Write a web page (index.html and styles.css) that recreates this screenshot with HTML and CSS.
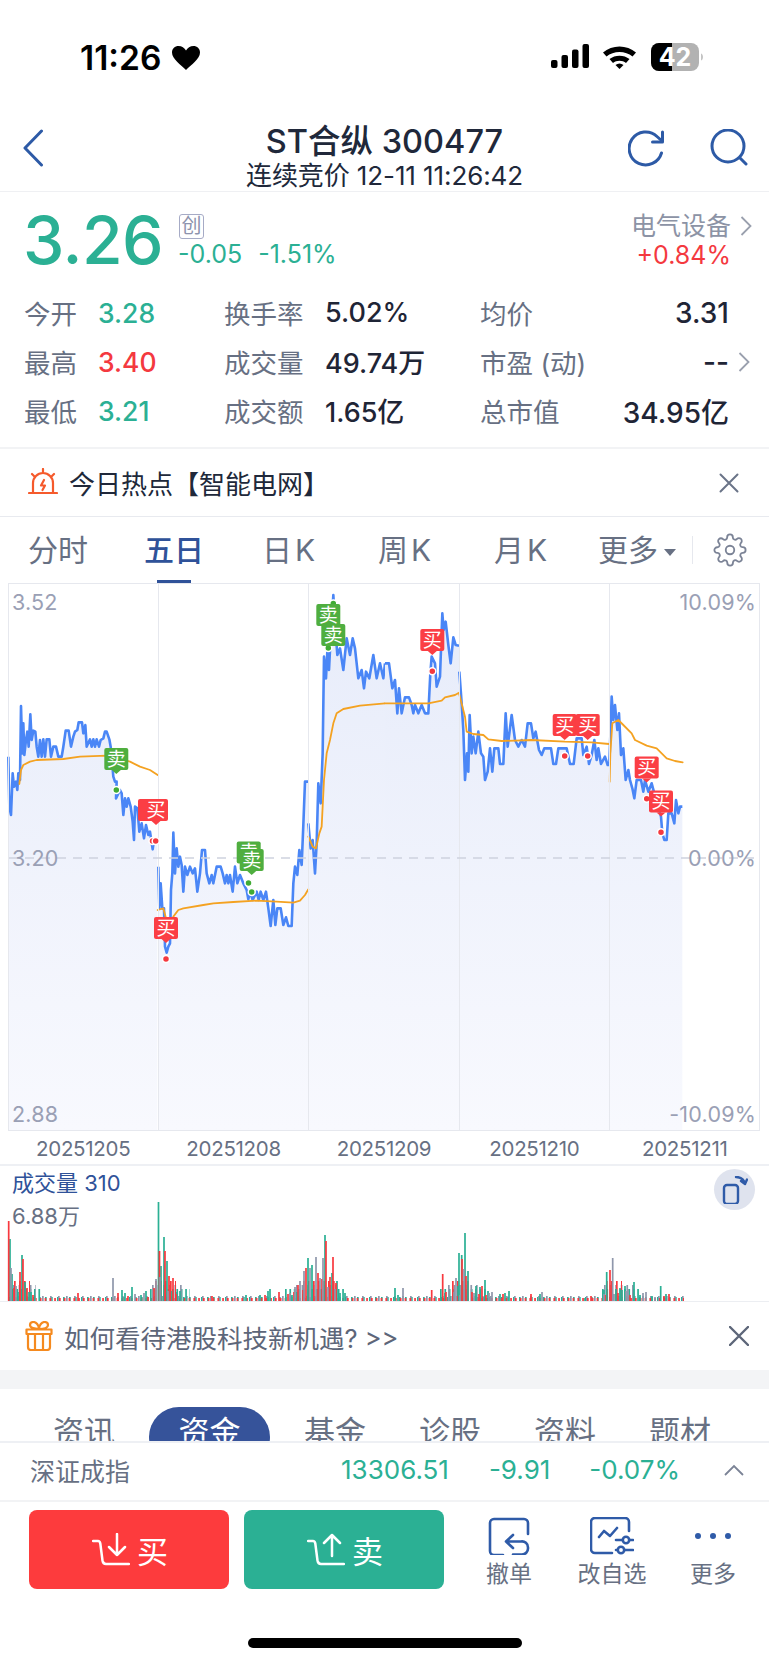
FILE: index.html
```html
<!DOCTYPE html>
<html lang="zh-CN">
<head>
<meta charset="utf-8">
<title>ST合纵 300477</title>
<link rel="stylesheet" href="styles.css">
</head>
<body>
<div class="screen">
  <div class="status">
    <div class="time">11:26</div>
    <svg class="heart" width="28" height="24" viewBox="0 0 28 24"><path d="M14 24C9 19 0 13 0 6.500 0 2.500 3 0 6.500 0 9.800 0 12.500 1.800 14 4.500 15.500 1.800 18.200 0 21.500 0 25 0 28 2.500 28 6.500 28 13 19 19 14 24Z"/></svg>
    <svg class="sysicons" width="152" height="30" viewBox="0 0 152 30">
      <rect x="0" y="17" width="6.500" height="8" rx="2"/><rect x="10.500" y="12" width="6.500" height="13" rx="2"/><rect x="21" y="6.500" width="6.500" height="18.500" rx="2"/><rect x="31.500" y="1" width="6.500" height="24" rx="2"/>
      <path d="M52 9.500C61 1.500 76 1.500 85 9.500L81.500 13.500C74.500 7.500 62.500 7.500 55.500 13.500Z"/><path d="M58.500 16C64 11.500 73 11.500 78.500 16L75 20C71.500 17 65.500 17 62 20Z"/><path d="M64.500 22C67 20 70 20 72.500 22L68.500 26Z"/>
      <rect x="100" y="0" width="48" height="28" rx="8" fill="#b2b2b2"/>
      <path d="M108 0H121V28H108A8 8 0 0 1 100 20V8A8 8 0 0 1 108 0Z"/>
      <path d="M150 10.500c1.500.5 2 2 2 3.500s-.5 3-2 3.500z" fill="#c4c4c4"/>
      <text class="batt" x="124" y="23">42</text>
    </svg>
  </div>

  <header class="nav">
    <svg class="back" width="22" height="38" viewBox="0 0 22 38"><path d="M19.500 2 3 19l16.500 17"/></svg>
    <div class="nav-title">
      <div class="name">ST合纵 300477</div>
      <div class="sub">连续竞价 12-11 11:26:42</div>
    </div>
    <div class="nav-actions">
      <svg width="38" height="38" viewBox="0 0 38 38"><path d="M33.500 24A16.500 16.500 0 1 1 29 7.500L34 12"/><path d="M34.500 3v10h-10"/></svg>
      <svg width="38" height="38" viewBox="0 0 38 38"><circle cx="18" cy="17" r="16"/><path d="m30 29 6 6"/></svg>
    </div>
  </header>

  <section class="quote">
    <div class="price-row">
      <div class="price">3.26</div>
      <div class="change-col">
        <span class="badge">创</span>
        <div class="change"><span>-0.05</span><span>-1.51%</span></div>
      </div>
      <div class="sector-col">
        <div class="sector">电气设备<svg class="chev" width="12" height="22" viewBox="0 0 12 22"><path d="m1.500 2 9 9-9 9"/></svg></div>
        <div class="sector-chg">+0.84%</div>
      </div>
    </div>
    <div class="stats">
      <div class="stat s1"><span class="k">今开</span><span class="down">3.28</span></div>
      <div class="stat s2"><span class="k">换手率</span><span class="v">5.02%</span></div>
      <div class="stat s3"><span class="k">均价</span><span class="v">3.31</span></div>
      <div></div>
      <div class="stat s1"><span class="k">最高</span><span class="up">3.40</span></div>
      <div class="stat s2"><span class="k">成交量</span><span class="v">49.74万</span></div>
      <div class="stat s3"><span class="k">市盈 (动)</span><span class="v">--</span></div>
      <svg class="chev" width="12" height="22" viewBox="0 0 12 22"><path d="m1.500 2 9 9-9 9"/></svg>
      <div class="stat s1"><span class="k">最低</span><span class="down">3.21</span></div>
      <div class="stat s2"><span class="k">成交额</span><span class="v">1.65亿</span></div>
      <div class="stat s3"><span class="k">总市值</span><span class="v">34.95亿</span></div>
      <div></div>
    </div>
  </section>

  <div class="hot">
    <svg width="30" height="30" viewBox="0 0 30 30" class="hot-ico"><path d="M5 24.500V15a10 10 0 0 1 20 0v9.500M1 25h28M15 1v4M4 6l2.500 2.500M26 6l-2.500 2.500"/><path d="m16 12-3 5.500h4l-2.500 4.500"/></svg>
    <div class="hot-text">今日热点【智能电网】</div>
    <svg class="close" width="20" height="20" viewBox="0 0 20 20"><path d="m1.500 1.500 17 17M18.500 1.500l-17 17"/></svg>
  </div>

  <nav class="periods">
    <span class="p">分时</span>
    <span class="p on">五日</span>
    <span class="p k-tab">日K</span>
    <span class="p k-tab">周K</span>
    <span class="p k-tab">月K</span>
    <span class="p more">更多<i class="caret"></i></span>
    <span class="sep"></span>
    <svg class="gear" width="34" height="34" viewBox="0 0 24 24"><path d="M12 15a3 3 0 1 0 0-6 3 3 0 0 0 0 6zM19.400 15a1.650 1.650 0 0 0 .33 1.820l.06.06a2 2 0 0 1 0 2.830 2 2 0 0 1-2.830 0l-.06-.06a1.650 1.650 0 0 0-1.820-.33 1.650 1.650 0 0 0-1 1.510V21a2 2 0 0 1-2 2 2 2 0 0 1-2-2v-.09A1.650 1.650 0 0 0 9 19.400a1.650 1.650 0 0 0-1.820.33l-.06.06a2 2 0 0 1-2.830 0 2 2 0 0 1 0-2.830l.06-.06a1.650 1.650 0 0 0 .33-1.820 1.650 1.650 0 0 0-1.510-1H3a2 2 0 0 1-2-2 2 2 0 0 1 2-2h.09A1.650 1.650 0 0 0 4.600 9a1.650 1.650 0 0 0-.33-1.820l-.06-.06a2 2 0 0 1 0-2.830 2 2 0 0 1 2.830 0l.06.06a1.650 1.650 0 0 0 1.820.33H9a1.650 1.650 0 0 0 1-1.510V3a2 2 0 0 1 2-2 2 2 0 0 1 2 2v.09a1.650 1.650 0 0 0 1 1.510 1.650 1.650 0 0 0 1.820-.33l.06-.06a2 2 0 0 1 2.830 0 2 2 0 0 1 0 2.830l-.06.06a1.650 1.650 0 0 0-.33 1.820V9a1.650 1.650 0 0 0 1.510 1H21a2 2 0 0 1 2 2 2 2 0 0 1-2 2h-.09a1.650 1.650 0 0 0-1.510 1z"/></svg>
  </nav>

  <svg class="chart" width="769" height="549" viewBox="0 583 769 549">
    <defs>
      <linearGradient id="areaFill" x1="0" y1="0" x2="0" y2="1"><stop offset="0" stop-color="#e7ecfa"/><stop offset="1" stop-color="#f8f9fe"/></linearGradient>
    </defs>
    <g transform="translate(0 580) scale(.33333)">
      <path class="area" d="M25 530L28 680 33 705 38 580 42 620 48 605 52 630 55 580 60 600 63 378 67 520 70 430 73 525 78 480 82 455 86 500 91 403 95 480 100 452 106 455 110 500 115 530 120 480 125 530 130 478 135 530 140 478 148 478 153 530 160 500 168 500 175 530 185 530 190 500 197 452 206 452 213 500 220 470 225 455 232 450 236 427 246 427 250 460 256 435 260 500 270 478 275 500 280 478 285 500 290 478 297 500 302 480 310 475 315 455 320 455 328 478 332 500 340 590 345 605 350 605 355 640 360 630 365 640 370 705 375 655 380 680 385 655 392 680 398 725 402 780 405 680 412 685 418 755 425 730 432 775 438 735 445 765 450 755 458 808 462 780 472 780V1650H25ZM475 860L478 985 482 910 487 985 492 985 495 1100 500 1118 505 1100 510 1090 513 930 517 880 520 758 525 880 530 805 535 860 540 830 545 855 550 935 555 860 562 885 570 860 578 880 585 865 592 935 600 880 606 810 615 810 620 880 628 910 635 885 640 910 650 860 662 860 668 880 675 910 680 885 685 910 690 885 698 935 705 860 712 910 720 885 730 910 740 930 745 958 750 935 758 960 770 935 776 960 782 935 790 960 798 935 805 985 812 1038 820 960 826 1035 832 985 842 985 850 1035 858 1012 865 1038 875 1038 880 910 885 860 892 885 898 810 905 855 910 735 915 605 925 605V1650H475ZM925 730L932 805 938 780 945 880 950 790 955 610 962 670 968 520 972 230 978 295 982 215 987 270 990 210 995 130 1000 45 1005 130 1012 225 1020 205 1030 270 1040 175 1050 225 1058 175 1065 205 1075 295 1085 270 1092 325 1098 275 1108 295 1120 225 1130 295 1140 250 1150 295 1155 250V1650H925Z"/>
      <path class="line" d="M25 530L28 680 33 705 38 580 42 620 48 605 52 630 55 580 60 600 63 378 67 520 70 430 73 525 78 480 82 455 86 500 91 403 95 480 100 452 106 455 110 500 115 530 120 480 125 530 130 478 135 530 140 478 148 478 153 530 160 500 168 500 175 530 185 530 190 500 197 452 206 452 213 500 220 470 225 455 232 450 236 427 246 427 250 460 256 435 260 500 270 478 275 500 280 478 285 500 290 478 297 500 302 480 310 475 315 455 320 455 328 478 332 500 340 590 345 605 350 605 348 655 360 630 365 640 370 705 375 655 380 680 385 655 392 680 398 725 402 780 405 680 412 685 418 755 425 730 432 775 438 735 445 765 450 755 458 808 462 780 M475 860L478 985 482 910 487 985 492 985 495 1100 500 1118 505 1100 510 1090 513 930 517 880 520 758 525 880 530 805 535 860 540 830 545 855 550 935 555 860 562 885 570 860 578 880 585 865 592 935 600 880 606 810 615 810 620 880 628 910 635 885 640 910 650 860 662 860 668 880 675 910 680 885 685 910 690 885 698 935 705 860 712 910 720 885 730 910 740 930 745 958 750 935 758 960 770 935 776 960 782 935 790 960 798 935 805 985 812 1038 820 960 826 1035 832 985 842 985 850 1035 858 1012 865 1038 875 1038 880 910 885 860 892 885 898 810 905 855 910 735 915 605 925 605 M925 730L932 805 938 780 945 880 950 790 955 610 962 670 968 520 972 230 978 295 982 215 987 270 990 210 995 130 1000 45 1005 130 1012 225 1020 205 1030 270 1040 175 1050 225 1058 175 1065 205 1075 295 1085 270 1092 325 1098 275 1108 295 1120 225 1130 295 1140 250 1150 295 1155 250"/>
      <path class="avg" d="M58 612L63 570 70 555 90 545 110 540 190 537 240 530 320 527 390 545 420 560 450 570 473 585M473 990L490 985 498 1015M520 1010L535 990 550 985 610 975 640 970 700 966 770 962 830 965 880 968 900 962 915 945 925 928M925 770L938 800 948 805 958 760 965 740 972 600 980 520 990 480 1000 430 1010 400 1030 387 1080 377 1155 370"/>
    </g>
    <g transform="translate(385 580) scale(.33333)">
      <path class="area" d="M0 250L12 250 22 325 30 300 37 400 42 325 50 400 60 352 72 352 80 375 85 400 90 375 100 400 110 375 120 400 130 400 136 280 140 230 150 250 155 320 165 290 172 100 176 150 182 125 190 195 197 250 205 172 212 195 222 197V1650H0ZM223 275L230 370 235 450 240 600 246 520 250 575 254 405 260 520 265 470 272 520 280 455 288 520 295 530 300 600 308 575 315 505 322 575 328 505 340 505 345 552 355 552 362 400 368 500 380 405 390 480 400 500 410 480 420 500 428 430 438 430 445 475 452 455 462 510 470 525 478 505 498 505 505 552 513 552 520 505 535 505 545 505 555 552 566 552 575 475 590 475 595 525 605 500 612 552 620 525 628 480 635 540 640 505 648 552 660 530 668 555 673 555V1650H223ZM673 555L680 350 685 420 690 375 697 450 702 400 708 525 715 505 722 600 730 570 735 600 742 625 748 655 755 600 768 600 775 635 780 600 790 635 800 610 808 640 828 710 832 760 838 780 845 780 850 700 860 700 868 730 873 660 880 700 885 680 892 680V1650H673Z"/>
      <path class="line" d="M0 250L12 250 22 325 30 300 37 400 42 325 50 400 60 352 72 352 80 375 85 400 90 375 100 400 110 375 120 400 130 400 136 280 140 230 150 250 155 320 165 290 172 100 176 150 182 125 190 195 197 250 205 172 212 195 222 197 M223 275L230 370 235 450 240 600 246 520 250 575 254 405 260 520 265 470 272 520 280 455 288 520 295 530 300 600 308 575 315 505 322 575 328 505 340 505 345 552 355 552 362 400 368 500 380 405 390 480 400 500 410 480 420 500 428 430 438 430 445 475 452 455 462 510 470 525 478 505 498 505 505 552 513 552 520 505 535 505 545 505 555 552 566 552 575 475 590 475 595 525 605 500 612 552 620 525 628 480 635 540 640 505 648 552 660 530 668 555 673 555 M673 555L680 350 685 420 690 375 697 450 702 400 708 525 715 505 722 600 730 570 735 600 742 625 748 655 755 600 768 600 775 635 780 600 790 635 800 610 808 640 828 710 832 760 838 780 845 780 850 700 860 700 868 730 873 660 880 700 885 680 892 680"/>
      <path class="avg" d="M0 370L130 370 170 362 180 352 210 345 222 338M222 340L240 410 245 455 265 462 295 465 310 478 350 483 440 480 540 485 620 487 672 492M674 605L676 520 682 430 700 420 715 435 740 460 750 480 785 497 815 505 845 535 870 543 893 547"/>
    </g>
    <path class="grid" d="M9 583.500H759M9 1130.500H759M8.500 583V1131M158.500 583V1131M308.500 583V1131M459.500 583V1131M609.500 583V1131M759.500 583V1131"/>
    <path class="zero" d="M9 858H759"/>

    <g class="dots-g">
      <circle cx="116.300" cy="790" r="3.500"/><circle cx="248.500" cy="883" r="3.500"/><circle cx="251.700" cy="892" r="3.500"/><circle cx="333.300" cy="603.500" r="3.500"/><circle cx="328.300" cy="648" r="3.500"/>
    </g>
    <g class="dots-r">
      <circle cx="152.500" cy="841" r="3.500"/><circle cx="155.700" cy="841" r="3.500"/><circle cx="166" cy="959" r="3.500"/><circle cx="432.300" cy="671.300" r="3.500"/><circle cx="564.700" cy="756" r="3.500"/><circle cx="587.700" cy="756" r="3.500"/><circle cx="646.700" cy="798.700" r="3.500"/><circle cx="661" cy="832.300" r="3.500"/>
    </g>

    <g class="tag sell" transform="translate(116.300 748)"><rect x="-12" width="24" height="22" rx="2"/><path d="m-4.500 22 4.500 4 4.500-4z"/><text y="17.500">卖</text></g>
    <g class="tag buy" transform="translate(150 799)"><rect x="-12" width="24" height="22" rx="2"/></g>
    <g class="tag buy" transform="translate(156 799)"><rect x="-12" width="24" height="22" rx="2"/><path d="m-4.500 22 4.500 4 4.500-4z"/><text y="17.500">买</text></g>
    <g class="tag buy" transform="translate(166 917)"><rect x="-12" width="24" height="22" rx="2"/><path d="m-4.500 22 4.500 4 4.500-4z"/><text y="17.500">买</text></g>
    <g class="tag sell" transform="translate(248.700 841.500)"><rect x="-12" width="24" height="22" rx="2"/><text y="17.500">卖</text></g>
    <g class="tag sell" transform="translate(251.700 849)"><rect x="-12" width="24" height="22" rx="2"/><path d="m-4.500 22 4.500 4 4.500-4z"/><text y="17.500">卖</text></g>
    <g class="tag sell" transform="translate(328.300 604)"><rect x="-12" width="24" height="22" rx="2"/><text y="17.500">卖</text></g>
    <g class="tag sell" transform="translate(333.300 624)"><rect x="-12" width="24" height="22" rx="2"/><text y="17.500">卖</text></g>
    <g class="tag buy" transform="translate(432.300 629)"><rect x="-12" width="24" height="22" rx="2"/><path d="m-4.500 22 4.500 4 4.500-4z"/><text y="17.500">买</text></g>
    <g class="tag buy" transform="translate(564.700 714)"><rect x="-12" width="24" height="22" rx="2"/><path d="m-4.500 22 4.500 4 4.500-4z"/><text y="17.500">买</text></g>
    <g class="tag buy" transform="translate(587.700 714)"><rect x="-12" width="24" height="22" rx="2"/><path d="m-4.500 22 4.500 4 4.500-4z"/><text y="17.500">买</text></g>
    <g class="tag buy" transform="translate(646.700 756.500)"><rect x="-12" width="24" height="22" rx="2"/><path d="m-4.500 22 4.500 4 4.500-4z"/><text y="17.500">买</text></g>
    <g class="tag buy" transform="translate(661 790.500)"><rect x="-12" width="24" height="22" rx="2"/><path d="m-4.500 22 4.500 4 4.500-4z"/><text y="17.500">买</text></g>

    <text class="ax" x="12" y="610">3.52</text>
    <text class="ax" x="12" y="866">3.20</text>
    <text class="ax" x="12" y="1122">2.88</text>
    <text class="ax end" x="756" y="610">10.09%</text>
    <text class="ax end" x="756" y="866">0.00%</text>
    <text class="ax end" x="756" y="1122">-10.09%</text>
  </svg>

  <div class="dates">
    <span>20251205</span><span>20251208</span><span>20251209</span><span>20251210</span><span>20251211</span>
  </div>

  <div class="vol">
    <svg class="vol-bars" width="769" height="136" viewBox="0 1166 769 136">
      <path class="cg c4" d="M9 1299H684"/>
      <path class="cs c5" d="M10 1298.500H684"/>
      <path class="cr c6" d="M11 1299.500H684"/>
      <path class="cg c12" d="M12 1295H42M150 1295H190M285 1295H345M440 1295H486M602 1295H640"/>
      <path class="cs c16" d="M13 1293H36M152 1293H182M296 1293H338M448 1293H478M604 1293H634"/>
      <path class="cr c20" d="M14 1291H30M155 1291H176M303 1291H336M452 1291H472M606 1291H622"/>
      <path class="vg" d="M10 1301v-62M12 1301v-27M18 1301v-9M22 1301v-46M25 1301v-19M29 1301v-9M31 1301v-9M122 1301v-11M125 1301v-8M132 1301v-14M141 1301v-6M146 1301v-10M158.500 1301v-99M161 1301v-35M164 1301v-64M167 1301v-40M172 1301v-10M177 1301v-9M180 1301v-10M246 1301v-6M260 1301v-6M268 1301v-10M270 1301v-12M292 1301v-6M297 1301v-9M303 1301v-7M308 1301v-43M312 1301v-36M318 1301v-12M325 1301v-66M332 1301v-28M337 1301v-20M340 1301v-8M345 1301v-8M395 1301v-13M398 1301v-6M445 1301v-8M458 1301v-15M459 1301v-48M461.700 1301v-46M465 1301v-68M468 1301v-30M476 1301v-15M480 1301v-14M485 1301v-21M488 1301v-10M500 1301v-7M505 1301v-8M509 1301v-10M540 1301v-7M585 1301v-3M604 1301v-11M606.700 1301v-29M616 1301v-12M620 1301v-13M622 1301v-11M625 1301v-15M634 1301v-19M640 1301v-6M652 1301v-5M660.700 1301v-15M666 1301v-7"/>
      <path class="vr" d="M8.700 1301v-80M14 1301v-13M20 1301v-29M23 1301v-42M27 1301v-13M33 1301v-6M78 1301v-8M118 1301v-8M128 1301v-5M148 1301v-4M154 1301v-13M159.500 1301v-50M165 1301v-50M169 1301v-25M173 1301v-23M176 1301v-7M212 1301v-5M265 1301v-6M279 1301v-9M288 1301v-7M294 1301v-9M298 1301v-16M303 1301v-11M306 1301v-33M318 1301v-28M322 1301v-22M326 1301v-60M330 1301v-24M333 1301v-44M336 1301v-18M431.700 1301v-11M442.700 1301v-27M446 1301v-9M457 1301v-5M462 1301v-42M466 1301v-25M472 1301v-9M479 1301v-7M482 1301v-15M486 1301v-6M503 1301v-7M531 1301v-7M591 1301v-5M605 1301v-6M610 1301v-31M612 1301v-20M618 1301v-8M630 1301v-6M664 1301v-5M669 1301v-7"/>
      <path class="vs" d="M11 1301v-33M16 1301v-15M113 1301v-23M135 1301v-7M144 1301v-8M156 1301v-22M160 1301v-24M168 1301v-10M290 1301v-8M295 1301v-14M300 1301v-20M304 1301v-30M310 1301v-33M316 1301v-44M320 1301v-23M323 1301v-43M328 1301v-14M335 1301v-12M403 1301v-13M454 1301v-9M456 1301v-23M460 1301v-6M464 1301v-32M474 1301v-8M489 1301v-8M492 1301v-9M542 1301v-9M604 1301v-7M614 1301v-7M612.700 1301v-43M626 1301v-10M628 1301v-12M643 1301v-8M646 1301v-9M655 1301v-4"/>
      <path class="vbase" d="M0 1301.500H769"/>
    </svg>
    <div class="vol-labels">
      <div class="vol-name">成交量 310</div>
      <div class="vol-max">6.88万</div>
    </div>
    <button class="rotate" aria-label="rotate"><svg width="26" height="28" viewBox="0 0 26 28"><rect x="2" y="9" width="14" height="19" rx="3"/><path d="M14 1c5 0 8 2.500 9 7M25 3.500 23 8l-4-3"/></svg></button>
  </div>

  <div class="notice">
    <svg class="gift" width="28" height="30" viewBox="0 0 28 30"><path d="M3 13v13a3 3 0 0 0 3 3h16a3 3 0 0 0 3-3V13M1.500 8.500h25V13h-25zM10 13v16M18 13v16M14 8C10 8 5 7 5 4s2-3 3.500-3C11 1 14 4 14 8c0-4 3-7 5.500-7C21 1 23 1 23 4s-5 4-9 4Z"/></svg>
    <div class="notice-text">如何看待港股科技新机遇? &gt;&gt;</div>
    <svg class="close dark" width="20" height="20" viewBox="0 0 20 20"><path d="m1 1 18 18M19 1 1 19"/></svg>
  </div>

  <div class="band"></div>

  <div class="info-tabs">
    <span class="it">资讯</span>
    <span class="it on">资金</span>
    <span class="it">基金</span>
    <span class="it">诊股</span>
    <span class="it">资料</span>
    <span class="it">题材</span>
  </div>

  <div class="index">
    <span class="idx-name">深证成指</span>
    <span class="idx-a">13306.51</span>
    <span class="idx-b">-9.91</span>
    <span class="idx-c">-0.07%</span>
    <svg class="idx-up" width="20" height="12" viewBox="0 0 20 12"><path d="m1 11 9-9 9 9"/></svg>
  </div>

  <div class="actions">
    <div class="trade buy-btn">
      <svg width="38" height="33" viewBox="0 0 38 33"><path d="M1 8h5c1.500 0 2 .8 2.300 2.500l2.200 17c.4 2.500 1.500 3.500 3.500 3.500H37M25 1v21M17 14l8 8 8-8"/></svg>
      <span>买</span>
    </div>
    <div class="trade sell-btn">
      <svg width="38" height="33" viewBox="0 0 38 33"><path d="M1 8h5c1.500 0 2 .8 2.300 2.500l2.200 17c.4 2.500 1.500 3.500 3.500 3.500H37M25 2v21M17 10l8-8 8 8"/></svg>
      <span>卖</span>
    </div>
    <div class="tool t1">
      <svg width="42" height="38" viewBox="0 0 42 38"><path d="M40 17V6a4 4 0 0 0-4-4H6a4 4 0 0 0-4 4v28a4 4 0 0 0 4 4h9M25 18l-7 6.500 7 6.500M18 24.500h15a6 6 0 0 1 7 6v1a6 6 0 0 1-6 6h-9"/></svg>
      <span>撤单</span>
    </div>
    <div class="tool t2">
      <svg width="44" height="38" viewBox="0 0 44 38"><path d="M39 14V5a4 4 0 0 0-4-4H5a4 4 0 0 0-4 4v27a4 4 0 0 0 4 4h17M9 20l5-6 6 5 7-8M26 23h17M26 33h17"/><circle cx="36" cy="23" r="3.200" class="knob"/><circle cx="31" cy="33" r="3.200" class="knob"/></svg>
      <span>改自选</span>
    </div>
    <div class="tool t3">
      <svg width="42" height="38" viewBox="0 0 42 38"><circle class="dot" cx="6" cy="19" r="3"/><circle class="dot" cx="21" cy="19" r="3"/><circle class="dot" cx="36" cy="19" r="3"/></svg>
      <span>更多</span>
    </div>
  </div>

  <div class="home"></div>
</div>
</body>
</html>
```

FILE: styles.css
```css
* { box-sizing: border-box; }
html, body { margin: 0; padding: 0; background: #fff; }
body { font-family: Inter, "Noto Sans CJK SC", "Liberation Sans", sans-serif; color: #1f2536; }
.screen { width: 769px; height: 1665px; overflow: hidden; display: flex; flex-direction: column; background: #fff; }

/* status bar */
.status { height: 115px; flex: none; display: flex; align-items: center; padding: 0 66px 0 80px; }
.time { font-size: 33.500px; font-weight: 600; color: #000; line-height: 40px; }
.heart { margin-left: 11px; fill: #000; }
.sysicons { margin-left: auto; fill: #000; }
.batt { font-family: Inter, sans-serif; font-size: 25px; font-weight: 700; fill: #fff; text-anchor: middle; }

/* nav */
.nav { height: 77px; flex: none; display: grid; grid-template-columns: 1fr auto 1fr; align-items: start; padding-top: 8px; border-bottom: 1px solid #eff0f3; }
.nav svg path, .nav svg circle { fill: none; stroke: #2d5aa6; stroke-width: 3; stroke-linecap: round; stroke-linejoin: round; }
.back { margin: 6px 0 0 22px; }
.nav-title { text-align: center; }
.name { font-size: 32.500px; font-weight: 500; line-height: 38px; color: #20283a; }
.sub { font-size: 26px; line-height: 30px; color: #20283a; letter-spacing: -.1px; }
.nav-actions { justify-self: end; display: flex; gap: 44px; padding: 6px 21px 0 0; }

/* quote */
.quote { height: 257px; flex: none; border-bottom: 2px solid #f2f3f5; }
.price-row { height: 96px; display: flex; padding-left: 23px; }
.price { width: 156px; font-size: 66px; line-height: 96px; font-weight: 500; color: #2bb094; letter-spacing: -.5px; }
.change-col { padding-top: 22px; }
.badge { display: block; width: 25px; height: 25px; border: 1px solid #a6abc6; border-radius: 3px; color: #8d93ad; font-size: 20px; line-height: 22px; text-align: center; }
.change { display: flex; gap: 16px; font-size: 25px; line-height: 30px; color: #2bb094; margin-left: -1px; }
.sector-col { margin-left: auto; padding-top: 20px; width: 138px; text-align: right; padding-right: 40px; white-space: nowrap; }
.sector { font-size: 25px; line-height: 28px; color: #8c93a5; position: relative; margin-right: 2px; }
.sector .chev { position: absolute; left: 109px; top: 3px; }
.chev path { fill: none; stroke: #9aa0ae; stroke-width: 1.800; }
.sector-chg { font-size: 25px; line-height: 30px; color: #f4393f; margin-right: -2px; }
.stats { display: grid; grid-template-columns: 200px 256px 249px 22px; grid-auto-rows: 49px; padding-left: 24px; align-items: center; font-size: 26.500px; }
.stat { display: flex; align-items: center; white-space: nowrap; }
.k { color: #677083; }
.s1 .k { width: 74px; }
.s2 .k { width: 101px; }
.s3 { justify-content: space-between; }
.v { color: #1f2536; font-weight: 500; font-size: 27px; }
.s3 .v { font-size: 28px; }
.down { color: #2bb094; font-weight: 500; }
.up { color: #f4393f; font-weight: 500; }
.stats .chev { margin-left: 9px; }

/* hot */
.hot { height: 68px; flex: none; display: flex; align-items: center; padding: 0 30px 0 28px; border-bottom: 1px solid #e8eaef; }
.hot-ico path { fill: none; stroke: #f55a2c; stroke-width: 2.200; stroke-linecap: round; stroke-linejoin: round; }
.hot-text { margin-left: 11px; font-size: 26px; font-weight: 400; color: #20283a; }
.close { margin-left: auto; }
.close path { fill: none; stroke: #6a7488; stroke-width: 2; stroke-linecap: round; }
.close.dark path { stroke: #5d6679; stroke-width: 2.400; }

/* period tabs */
.periods { height: 66px; flex: none; display: flex; align-items: center; }
.p { width: 116px; text-align: center; font-size: 30px; color: #677083; line-height: 66px; position: relative; white-space: nowrap; }
.k-tab { letter-spacing: 3px; }
.p.on { color: #2f5299; font-weight: 500; }
.p.on::after { content: ""; position: absolute; left: 41px; width: 34px; height: 3px; bottom: 0; background: #2f5299; }
.more { width: 114px; }
.caret { display: inline-block; width: 0; height: 0; margin-left: 6px; vertical-align: middle; border: 6px solid transparent; border-top: 7px solid #677083; border-bottom: 0; }
.sep { width: 1px; height: 28px; background: #e6e8ee; margin-left: -2px; }
.gear { margin-left: 20px; }
.gear path { fill: none; stroke: #7b8396; stroke-width: 1.300; }

/* chart */
.chart { flex: none; display: block; }
.area { fill: url(#areaFill); }
.line { fill: none; stroke: #4a86f6; stroke-width: 2.600; stroke-linejoin: round; vector-effect: non-scaling-stroke; }
.avg { fill: none; stroke: #f4a221; stroke-width: 1.800; stroke-linejoin: round; stroke-linecap: round; vector-effect: non-scaling-stroke; }
.grid { fill: none; stroke: #e6e8ee; stroke-width: 1; }
.zero { fill: none; stroke: #ced2de; stroke-width: 1.400; stroke-dasharray: 9 7; }
.dots-g circle { fill: #40ab34; stroke: #fff; stroke-width: 1.500; }
.dots-r circle { fill: #f4393f; stroke: #fff; stroke-width: 1.500; }
.tag rect, .tag path { stroke: none; }
.tag text { font-size: 19px; fill: #fff; text-anchor: middle; }
.buy rect, .buy path { fill: #fb3e44; }
.sell rect, .sell path { fill: #4fae3f; }
.ax { font-size: 21.500px; fill: #9aa0b5; letter-spacing: .2px; }
.ax.end { text-anchor: end; }

/* dates */
.dates { height: 34px; flex: none; display: grid; grid-template-columns: repeat(5, 150.400px); padding-left: 8px; align-items: center; font-size: 20.500px; color: #677083; text-align: center; border-bottom: 2px solid #eef0f4; letter-spacing: -.3px; }

/* volume */
.vol { height: 136px; flex: none; position: relative; }
.vol-bars { display: block; position: absolute; left: 0; top: 0; }
.vol-bars path { fill: none; stroke-width: 1.700; }
.vg, .cg { stroke: #2bb094; }
.vr, .cr { stroke: #f8393f; }
.vs, .cs { stroke: #8f97ab; }
.vol-bars .c4 { stroke-width: 4; stroke-dasharray: 1.700 4.300; }
.vol-bars .c5 { stroke-width: 5; stroke-dasharray: 1.700 6.300; }
.vol-bars .c6 { stroke-width: 3; stroke-dasharray: 1.700 3.100; }
.vol-bars .c12 { stroke-width: 12; stroke-dasharray: 1.700 2.700; }
.vol-bars .c16 { stroke-width: 16; stroke-dasharray: 1.700 3.900; }
.vol-bars .c20 { stroke-width: 20; stroke-dasharray: 1.700 3.300; }
.vol-bars .vbase { stroke: #eceef2; stroke-width: 1; }
.vol-labels { position: absolute; left: 12px; top: 2px; }
.vol-name { font-size: 22px; line-height: 30px; color: #2f5299; }
.vol-max { font-size: 22px; line-height: 30px; margin-top: 3px; color: #677083; }
.rotate { position: absolute; left: 714px; top: 3px; width: 41px; height: 41px; padding: 0; border: 0; border-radius: 50%; background: #dfe3ee; display: flex; align-items: center; justify-content: center; }
.rotate rect, .rotate path { fill: none; stroke: #2f5ba8; stroke-width: 2.400; stroke-linecap: round; stroke-linejoin: round; }

/* notice */
.notice { height: 68px; flex: none; display: flex; align-items: center; padding: 0 20px 0 25px; }
.gift path { fill: none; stroke: #f58a1f; stroke-width: 2.200; stroke-linejoin: round; }
.notice-text { margin-left: 11px; font-size: 25.500px; color: #5d6679; }

.band { height: 19px; flex: none; background: #f3f4f6; }

/* info tabs */
.info-tabs { height: 54px; flex: none; display: flex; padding: 18px 0 0 44px; gap: 35px; overflow: hidden; border-bottom: 2px solid #eef0f4; }
.it { flex: none; width: 80px; height: 60px; line-height: 50px; text-align: center; font-size: 31px; color: #677083; }
.it.on { width: 121px; margin: 0 -10px; background: #36539a; color: #fff; border-radius: 30px; }

/* index */
.index { height: 57px; flex: none; display: flex; align-items: center; padding: 0 25px 4px 30px; font-size: 26px; color: #2bb094; }
.idx-name { color: #677083; margin-right: auto; font-size: 25px; }
.idx-b { margin-left: 40px; }
.idx-c { margin-left: 39px; }
.idx-up { margin-left: 44px; }
.idx-up path { fill: none; stroke: #7b8396; stroke-width: 1.800; }

/* actions */
.actions { flex: none; height: 94px; border-top: 2px solid #f2f3f5; display: flex; padding: 8px 0 0 29px; }
.trade { width: 200px; height: 79px; border-radius: 8px; display: flex; align-items: center; justify-content: center; gap: 7px; color: #fff; font-size: 31px; padding-left: 2px; }
.trade svg path { fill: none; stroke: #fff; stroke-width: 2.500; stroke-linecap: round; stroke-linejoin: round; }
.buy-btn { background: #fd3b3d; }
.sell-btn { background: #2bb094; margin-left: 15px; }
.tool { display: flex; flex-direction: column; align-items: center; font-size: 23px; color: #677083; line-height: 30px; gap: 4px; width: 60px; margin-top: 7px; white-space: nowrap; }
.tool svg path, .tool svg circle { fill: none; stroke: #2f5ba8; stroke-width: 2.600; stroke-linecap: round; stroke-linejoin: round; }
.tool svg .knob { fill: #fff; }
.tool svg .dot { fill: #2f5ba8; stroke: none; }
.t1 { margin-left: 35px; }
.t2 { margin-left: 43px; }
.t3 { margin-left: 41px; }

.home { width: 274px; height: 10px; flex: none; border-radius: 5px; background: #000; margin: 44px 0 0 248px; }
```
